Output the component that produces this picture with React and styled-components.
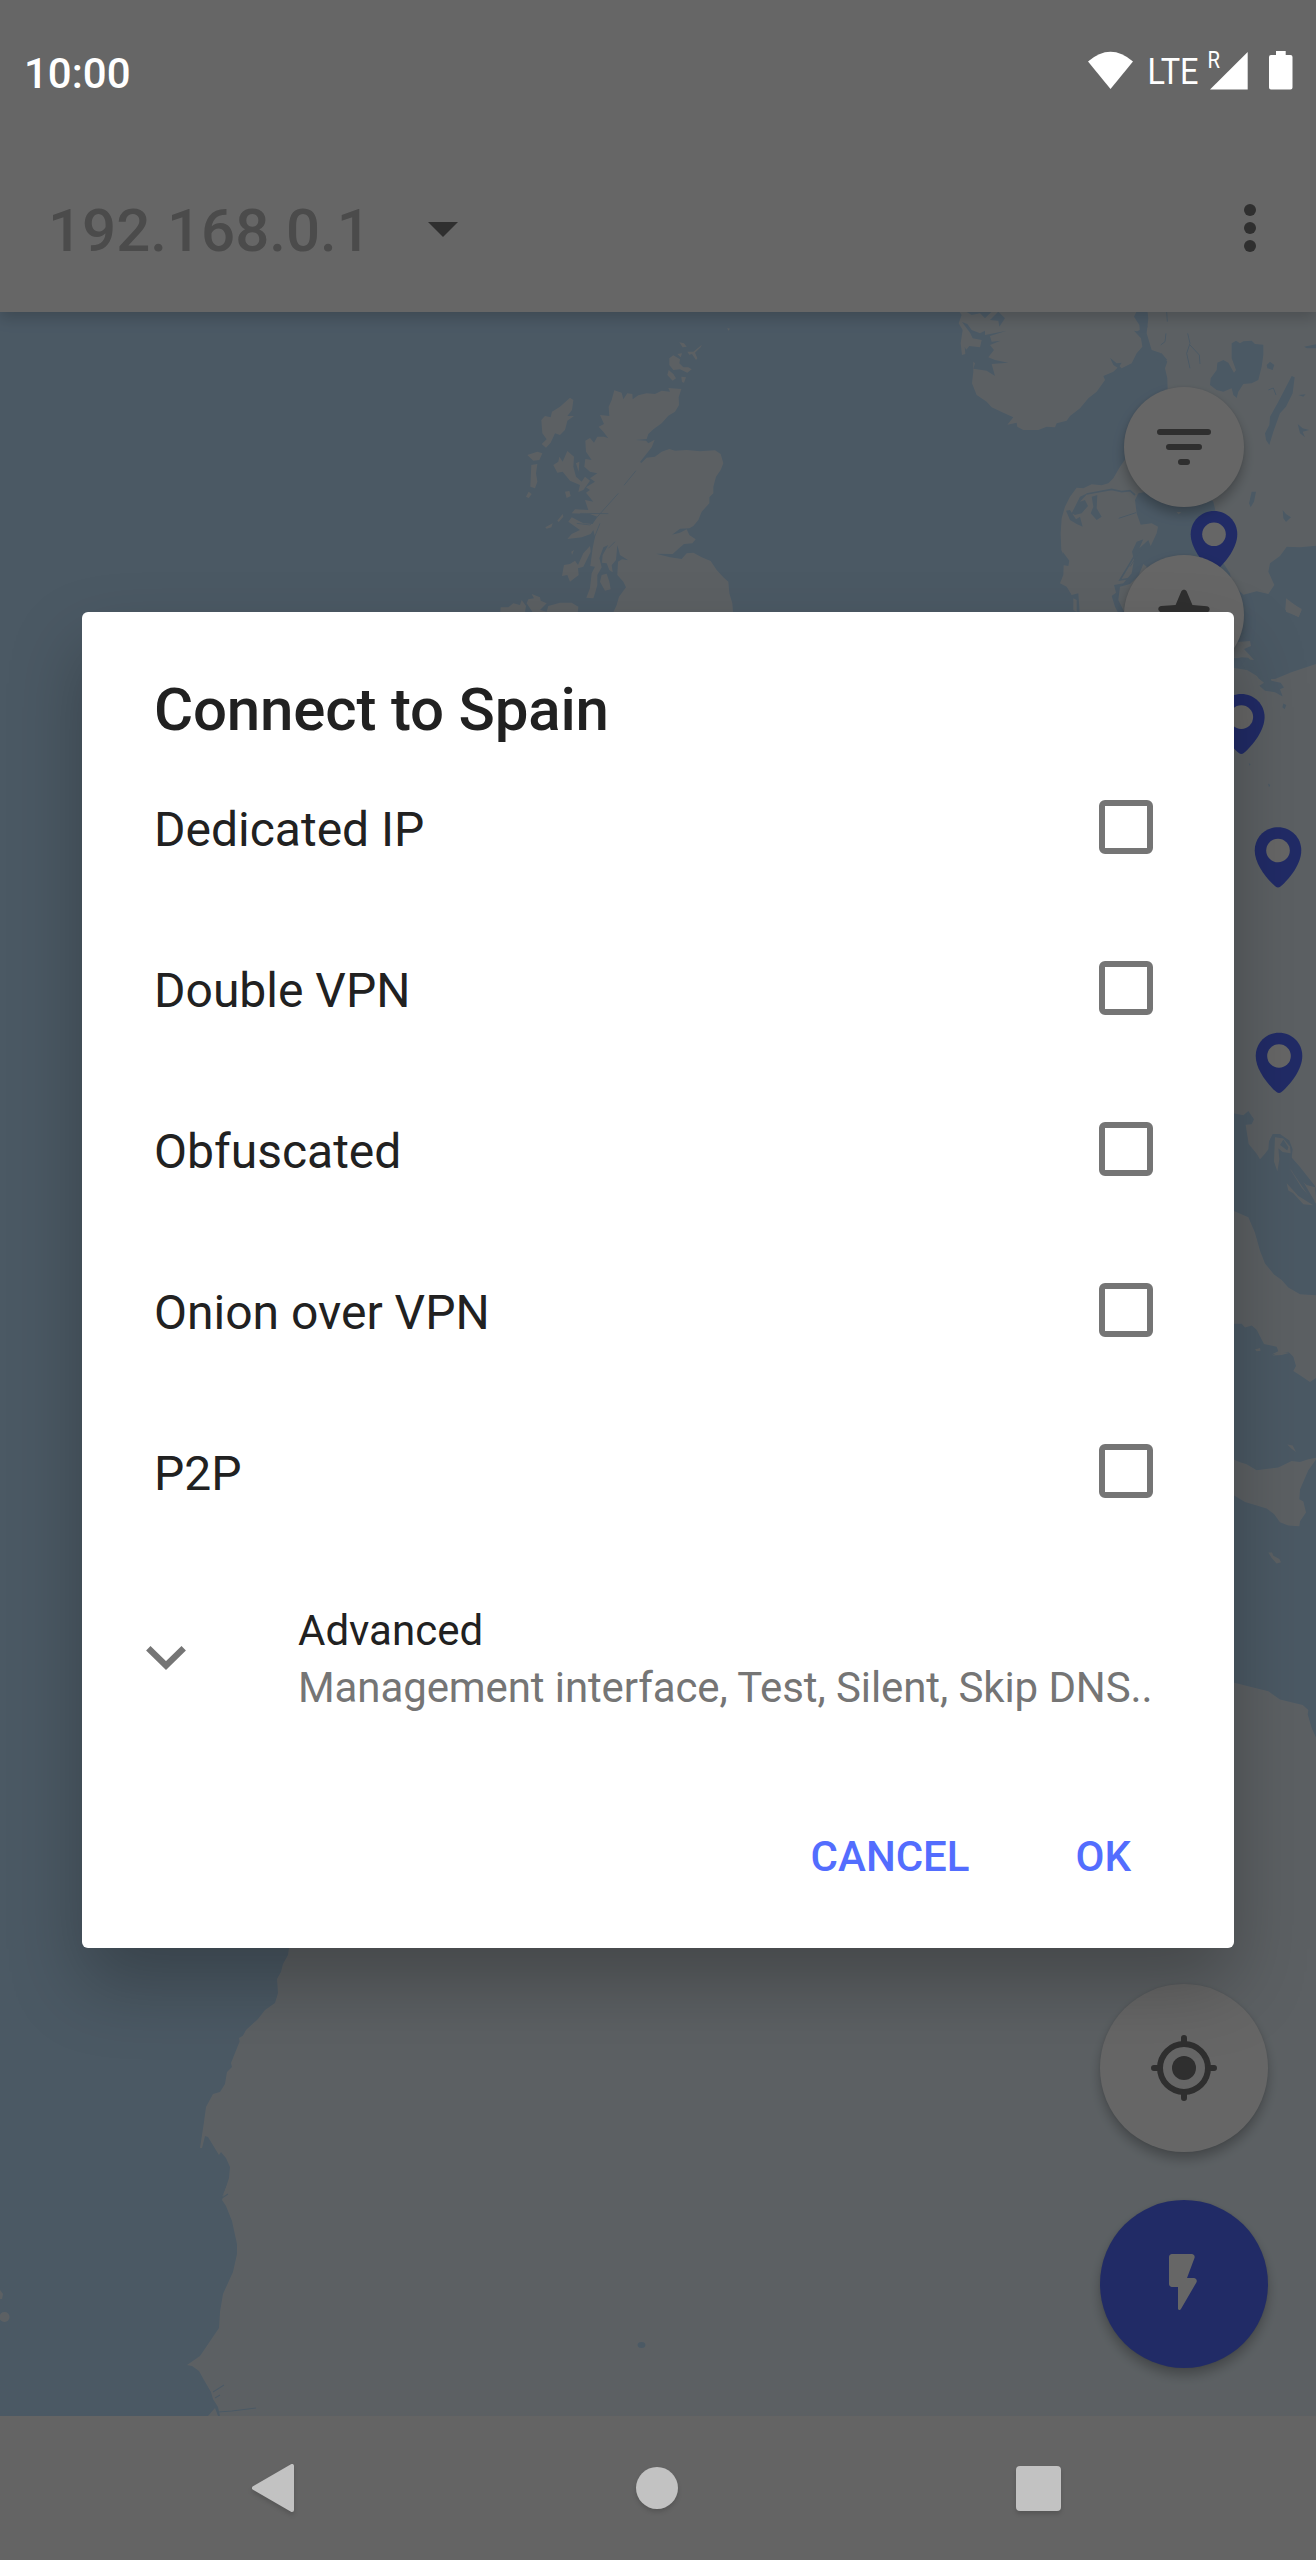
import React from "react";
import styled, { createGlobalStyle } from "styled-components";

const GlobalStyle = createGlobalStyle`
  *, *::before, *::after { box-sizing: border-box; }
  body { margin: 0; background: #fff; }
  svg { display: block; flex: none; }
  button { border: 0; padding: 0; background: none; font: inherit; }
`;

const Screen = styled.div`
  position: relative;
  width: 1316px;
  height: 2560px;
  overflow: hidden;
  display: grid;
  grid-template-rows: 144px 168px 1fr 144px;
  background: linear-gradient(#fff 312px, #fafafa 312px);
  font-family: Roboto, "Noto Sans", sans-serif;
  color: #212121;
`;

const StatusBar = styled.header`
  position: relative;
  z-index: 3;
  display: flex;
  align-items: center;
  justify-content: space-between;
  padding: 0 22px 0 24px;
  color: #fff;
`;

const Clock = styled.time`
  padding-top: 3px;
  font-size: 42px;
  font-weight: 500;
  line-height: 50px;
`;

const StatusGlyphs = styled.svg`
  overflow: visible;
`;

const Toolbar = styled.div`
  position: relative;
  z-index: 1;
  display: flex;
  align-items: center;
  padding: 0 30px 0 48px;
  background: #fff;
  box-shadow: 0 6px 14px rgba(0, 0, 0, 0.18);
  clip-path: inset(0 0 -30px 0);
`;

const Address = styled.h1`
  margin: 0;
  padding-top: 5px;
  width: 380px;
  font-size: 60px;
  font-weight: 500;
  line-height: 72px;
  color: #bbb;
`;

const Caret = styled.span`
  margin-top: 3px;
  border: 15px solid transparent;
  border-top-color: #757575;
  border-bottom-width: 0;
`;

const Overflow = styled.button`
  margin-left: auto;
  width: 72px;
  height: 72px;
  display: flex;
  flex-direction: column;
  align-items: center;
  justify-content: center;
  gap: 6px;
`;

const Dot = styled.span`
  width: 12px;
  height: 12px;
  border-radius: 50%;
  background: #757575;
`;

const MapArea = styled.main`
  position: relative;
  overflow: hidden;
  background: #bbdefb;
`;

const Fab = styled.button`
  position: absolute;
  left: ${(p) => 1184 - p.$size / 2}px;
  top: ${(p) => p.$y - 312 - p.$size / 2}px;
  width: ${(p) => p.$size}px;
  height: ${(p) => p.$size}px;
  display: flex;
  align-items: center;
  justify-content: center;
  border-radius: 50%;
  background: ${(p) => (p.$accent ? "#536dfe" : "#fff")};
  color: ${(p) => (p.$accent ? "#fff" : "#757575")};
  box-shadow: 0 7px 12px rgba(0, 0, 0, 0.26), 0 0 3px rgba(0, 0, 0, 0.08);
`;

const Scrim = styled.div`
  position: absolute;
  inset: 0;
  z-index: 2;
  padding: 612px 82px;
  background: rgba(0, 0, 0, 0.6);
`;

const Dialog = styled.section`
  height: 1336px;
  display: flex;
  flex-direction: column;
  padding-top: 62px;
  border-radius: 6px;
  background: #fff;
  box-shadow: 0 36px 72px rgba(0, 0, 0, 0.26);
`;

const DialogTitle = styled.h2`
  margin: 0 72px 4px;
  font-size: 60px;
  font-weight: 500;
  line-height: 71px;
  letter-spacing: -0.18px;
`;

const OptionRow = styled.label`
  height: 161px;
  display: flex;
  align-items: center;
  justify-content: space-between;
  padding: 0 81px 0 72px;
  font-size: 48px;
  line-height: 56px;
`;

const CheckBox = styled.span`
  width: 54px;
  height: 54px;
  margin-bottom: 6px;
  border: 6px solid #757575;
  border-radius: 6px;
`;

const AdvancedRow = styled.div`
  height: 210px;
  display: flex;
  align-items: center;
  padding: 0 80px 0 64px;
  font-size: 42px;
  line-height: 57px;
`;

const Chevron = styled.svg`
  margin-bottom: 2px;
`;

const AdvancedText = styled.div`
  margin-left: 112px;
  white-space: nowrap;
`;

const Summary = styled.div`
  color: #757575;
  letter-spacing: -0.1px;
`;

const Actions = styled.footer`
  height: 184px;
  display: flex;
  align-items: center;
  justify-content: flex-end;
  gap: 106px;
  padding: 1px 103px 0 0;
`;

const Action = styled.button`
  font-size: 42px;
  font-weight: 500;
  line-height: 50px;
  color: #536dfe;
`;

const NavBar = styled.nav`
  position: relative;
  z-index: 3;
  display: grid;
  grid-template-columns: 1fr 42px 1fr;
  align-items: center;
  padding: 0 255px 0 251px;
  color: #c2c2c2;
`;

const NavButton = styled.button`
  justify-self: ${(p) => p.$side};
  color: inherit;
  filter: drop-shadow(0 3px 2px rgba(0, 0, 0, 0.14));
`;

const HomeDisc = styled.span`
  display: block;
  width: 42px;
  height: 42px;
  margin-left: 2px;
  border-radius: 50%;
  background: currentColor;
`;

const RecentsSquare = styled.span`
  display: block;
  width: 45px;
  height: 45px;
  border-radius: 4px;
  background: currentColor;
`;

const options = ["Dedicated IP", "Double VPN", "Obfuscated", "Onion over VPN", "P2P"];
const pins = [[1214, 534.3], [1241.3, 717.1], [1278, 850.5], [1279, 1056]];

const StatusIcons = () => (
  <StatusGlyphs width="210" height="46" viewBox="1084 50 210 46" fill="#fff">
    <path d="M1088 62.5Q1110.500 43 1133 62.500L1110.500 90Z" />
    <text x="1147.500" y="84.700" fontSize="37" textLength="51" lengthAdjust="spacingAndGlyphs">LTE</text>
    <text x="1207.500" y="68.600" fontSize="23.500" textLength="12.500" lengthAdjust="spacingAndGlyphs">R</text>
    <path d="M1210 90.500L1247.700 53V90.500Z" />
    <path d="M1276 52h9.700v4h4.800a2 2 0 0 1 2 2v30.500a2 2 0 0 1-2 2h-19.500a2 2 0 0 1-2-2V58a2 2 0 0 1 2-2h5z" />
  </StatusGlyphs>
);

const Pin = ({ x, y }) => (
  <g transform={`translate(${x} ${y})`}>
    <path fill="#536dfe" d="M0-23.200C13-23.200 23.300-13 23.300 0C23.300 13 12 28 2.500 36Q0 38-2.500 36C-12 28-23.300 13-23.300 0C-23.300-13-13-23.200 0-23.200Z" />
    <circle r="11.800" fill="#fff" />
  </g>
);

const LAND = "#e6f1f8";
const WATER = "#bbdefb";

const MapDrawing = () => (
  <svg width="1316" height="2104" viewBox="0 312 1316 2104" fill={LAND}>
    {/* Scotland, the Hebrides and Orkney */}
    <g transform="translate(480 310) scale(.33333)">
      <path d="M403 241L425 248L430 268L442 250L457 252L458 268L475 256L500 250L525 252L545 242L570 245L565 234L604 237L596 262L597 285L585 305L565 317L545 340L520 358L505 372L500 387L466 390L498 392L505 400L524 389L515 412L480 456L484 459L500 443L525 440L545 425L568 417L585 422L620 420L660 424L705 421L722 432L730 460L722 480L708 500L700 530L700 550L688 562L688 580L665 605L655 630L640 648L628 655L600 656L576 674L600 668L620 658L628 675L647 688L637 700L612 702L597 715L578 732L528 731L570 742L605 747L620 730L640 728L665 742L692 753L710 780L730 802L745 815L748 850L757 880L760 920L394 920L410 885L417 860L438 832L430 815L412 795L414 755L426 748L445 751L420 735L412 705L408 750L395 766L398 787L388 780L380 760L366 758L368 735L385 705L370 712L358 745L365 772L352 795L352 825L345 850L340 865L319 863L330 835L335 790L345 770L331 768L338 715L345 680L340 660L332 672L305 682L262 687L275 672L300 660L265 635L275 622L310 640L338 642L352 620L330 612L275 610L285 598L325 600L315 570L340 575L318 548L330 540L318 532L345 515L330 505L352 490L330 485L313 470L316 447L335 450L318 425L316 392L330 384L342 398L352 380L372 380L385 385L370 365L356 350L372 342L360 315L388 318L386 290L395 270Z" />
      <path d="M270 263L280 270L276 300L262 318L282 318L262 332L255 360L240 375L225 370L212 398L198 413L185 402L200 388L187 370L184 330L195 318L212 322L216 305L240 290Z" />
      <path d="M142 435L172 425L187 430L178 450L160 452ZM154 465L172 462L168 490L172 515L165 535L151 530ZM146 545L155 552L146 564L138 560ZM262 423L282 440L280 470L288 500L305 515L315 500L330 512L310 540L295 546L300 525L270 512L248 485L232 488L220 465L235 455L238 440L248 455ZM255 545L268 543L272 558L260 564ZM232 632L248 612L250 620L236 636ZM196 652L218 640L214 652L200 656ZM330 708L332 725L310 770L294 775L296 795L270 815L262 795L246 798L252 765L270 762L285 752L294 765L310 730ZM365 795L380 791L388 815L392 838L375 842L360 815ZM274 725L282 720L276 735ZM288 460L298 455L296 485Z" />
      <path d="M568 145L580 136L600 148L598 160L610 172L625 172L635 178L622 188L600 178L580 180L568 165ZM598 97L612 100L620 110L608 112ZM592 132L606 130L602 142ZM622 125L640 125L665 105L662 112L645 128L652 145L648 150L636 132L628 134ZM566 180L580 192L588 205L578 212L562 195ZM604 200L618 202L612 218L606 216ZM742 54L750 56L745 62Z" />
      <path d="M60 920L62 892L85 892L100 880L120 885L125 870L138 888L135 905L160 910L150 895L140 880L145 868L162 865L155 852L180 862L182 872L200 880L180 900L200 905L205 888L240 878L275 878L295 890L292 920Z" />
      <path fill="none" stroke={WATER} strokeWidth="2.500" d="M468 482L432 526M415 550L330 645L290 640M385 611L300 610M360 640L340 690M405 695L385 715" />
    </g>

    {/* Norway, Sweden and Denmark */}
    <g transform="translate(930 300) scale(.33333)">
      <path d="M85 30L95 45L86 70L98 90L92 130L96 165L106 162L104 140L120 170L130 180L130 215L126 250L140 285L170 305L185 322L220 338L250 352L232 374L260 368L262 380L280 390L325 390L350 380L375 382L380 370L410 362L420 348L450 325L475 295L500 275L525 240L520 228L550 215L568 198L575 205L605 190L620 160L637 140L633 115L612 92L630 95L628 75L612 50L622 30Z" />
      <path d="M652 30L655 55L650 100L665 150L690 158L712 185L705 205L712 235L714 300L800 560L850 605L858 640L880 790L900 820L905 850L940 884L980 874L1015 882L1033 855L1015 815L1020 790L1050 768L1070 740L1110 742L1170 736L1170 30Z" />
      <path d="M590 472L570 500L550 535L535 550L515 556L485 553L460 565L440 563L420 590L405 620L395 655L392 700L394 750L402 770L400 825L390 850L410 860L425 885L445 880L450 950L570 950L555 920L545 888L558 878L552 855L580 850L605 820L612 780L606 755L620 725L640 718L628 745L655 720L662 738L680 700L684 680L665 670L632 674L620 640L615 600L625 580L680 570Z" />
      <path d="M570 860L600 852L625 828L640 792L650 800L650 950L590 950L565 900ZM430 895L440 900L440 936L430 930ZM740 636L754 636L746 643ZM1068 895L1115 930L1105 950L1068 935Z" />
      <g fill={WATER}>
        <path d="M100 30L125 45L150 40L165 55L190 30ZM96 66L112 72L125 90L150 100L165 92L165 105L230 92L180 108L185 125L212 122L180 135L192 150L175 172L195 180L235 188L185 192L195 228L170 212L130 206L135 190L112 170L108 150L118 138L150 142L155 120L128 115L120 98ZM205 35L225 55L208 80L205 62L180 60ZM540 173L560 190L575 188L565 205L550 195Z" />
        <path d="M905 130L918 122L930 130L940 124L965 122L975 132L1000 134L1000 165L995 200L985 240L965 250L940 252L925 275L920 294L910 285L905 265L880 275L860 270L840 255L842 235L860 210L862 188L880 180L895 188L912 218L918 210L905 175ZM1010 195L1020 185L1033 195L1028 210L1012 205ZM1085 228L1094 232L1088 280L1068 320L1050 340L1030 395L1018 435L1008 420L1005 400L1018 375L1020 350L1045 305ZM1103 372L1118 385L1138 390L1118 395L1125 412L1110 400ZM965 575L978 575L972 605L962 622L957 610ZM1058 630L1068 642L1083 652L1068 666L1060 655ZM1122 140L1160 132L1160 145L1130 145ZM1105 285L1127 283L1120 290ZM408 632L420 630L438 658L450 650L458 680L440 672L420 660ZM425 640L450 590L475 578L450 605L465 600L474 618L455 640L435 645ZM485 590L502 585L500 625L515 650L500 660L482 640L490 620ZM398 755L418 782L415 798L398 795ZM670 165L695 160L712 180L690 190Z" />
        <path fill="none" stroke={WATER} strokeWidth="5" d="M470 582L545 568L575 575L600 572L615 585M645 30L640 65L650 80L620 98M618 760L570 840L600 835" />
        <path fill="none" stroke={WATER} strokeWidth="3" d="M566 655L618 638M773 100L780 130L770 160L780 205M780 135L808 165L810 192M710 36L712 65M708 100L705 125L692 135M1015 270L1030 264L1038 285M640 740L600 800" />
      </g>
    </g>

    {/* Baltic coast and central Europe */}
    <path d="M1200 650L1216 642L1221 633L1225 643L1250 641L1251 646L1244 649L1254 660L1243 659L1233 658L1234 668L1247 670L1262 679L1275 679L1292 672L1316 664V2416H0L100 1700L1150 1250Z" />
    <g transform="translate(1200 600) scale(.33333 .35714)">
      <path d="M258 0L305 25L296 48L256 28Z" />
      <path fill={WATER} d="M100 165L125 160L145 162L160 178L158 190L135 188L110 180ZM165 205L180 200L192 215L212 218L214 226L242 232L252 245L240 250L248 270L225 258L195 254L178 240L192 232L176 220ZM250 290L259 294L254 306L247 300ZM146 457L152 459L149 464ZM204 514L211 518L207 524Z" />
    </g>

    {/* Seas around Italy */}
    <g transform="translate(1200 1100) scale(.33333 .54845)">
      <path fill={WATER} d="M0 24H100L130 28L145 20L162 35L155 44L137 45L146 80L170 98L180 108L195 98L205 90L207 75L218 62L240 62L268 74L278 90L275 105L300 122L345 157L350 170V356L300 354L265 342L245 328L222 318L195 298L180 275L165 242L145 214L100 202L0 200ZM100 408L125 408L135 415L155 411L170 419L192 445L230 450L235 458L215 464L265 459L280 468L288 485L280 494L300 502L330 514L350 506V652L325 655L300 660L275 658L235 670L170 675L140 664L118 660L100 655L0 650V400ZM0 720H100L135 733L200 745L222 755L240 770L265 776L298 777L300 768L318 752L310 732L298 728L300 710L325 675L350 654V1165L335 1145L323 1120L325 1112L308 1103L240 1093L205 1078L100 1062L0 1050Z" />
      <path d="M225 68L250 70L270 85L272 97L248 95L235 88L238 108L232 130L222 112ZM165 455L180 452L182 457L170 458ZM218 466L240 459L270 461L245 465ZM205 825L216 825L220 831L238 837L243 843L230 845L215 835ZM260 152L295 175L340 192L310 190L280 170L265 165ZM270 126L300 145L320 155L345 159L350 190L305 160ZM262 628L278 630L288 642L275 636Z" />
      <path fill={WATER} d="M250 72L265 86L262 92L240 82ZM272 100L290 128L330 170L345 185L338 186L278 132Z" />
    </g>

    {/* Atlantic and the African coast */}
    <path fill={WATER} d="M0 650H70V1700H300L289 1948L288 1955L283 1964L281 1972L277 1979L278 1993L275 2003L265 2010L258 2019L246 2030L239 2043L231 2063L232 2067L227 2072L225 2084L220 2092L213 2094L206 2107L204 2122L200 2148L202 2148L205 2136L208 2137L219 2155L221 2152L226 2158L230 2167L229 2178L222 2200L226 2206L232 2221L237 2244L237 2254L233 2272L223 2294L220 2312L219 2328L200 2356L187 2365L192 2366L199 2371L204 2380L211 2392L213 2399L218 2407L220 2416H0Z" />
    <path d="M0 2290L3 2294L2 2299H0ZM239 2038L246 2034L240 2043ZM222 2197L228 2183L229 2188L224 2194Z" />
    <circle cx="4.500" cy="2317" r="5" />
    <path d="M208 2416L215 2408L218 2416Z" />
    <path fill="none" stroke={WATER} strokeWidth="1.200" d="M213 2392L224 2385M215 2398L220 2395M218 2412L232 2411L256 2408M222 2198L228 2194" />
    <ellipse cx="641.500" cy="2345" rx="4" ry="3" fill={WATER} />

    {pins.map(([x, y]) => <Pin key={y} x={x} y={y} />)}
  </svg>
);

const FilterIcon = () => (
  <svg width="72" height="72" viewBox="0 0 72 72" stroke="currentColor" strokeWidth="6" strokeLinecap="round">
    <path d="M12 21H60M21 36H51M33 51H39" />
  </svg>
);

const StarIcon = () => (
  <svg width="72" height="72" viewBox="0 0 24 24" fill="currentColor">
    <path d="M12 17.270l4.150 2.510c.76.46 1.690-.22 1.490-1.080l-1.100-4.720 3.670-3.180c.67-.58.31-1.680-.57-1.750l-4.830-.41-1.890-4.460c-.34-.81-1.500-.81-1.840 0L9.190 8.630l-4.830.41c-.88.07-1.240 1.170-.57 1.750l3.670 3.180-1.100 4.720c-.2.86.73 1.540 1.490 1.080l4.150-2.500z" />
  </svg>
);

const LocateIcon = () => (
  <svg width="72" height="72" viewBox="0 0 72 72" fill="none" stroke="currentColor" strokeWidth="6" strokeLinecap="round">
    <circle cx="36" cy="36" r="24" />
    <circle cx="36" cy="36" r="12" fill="currentColor" stroke="none" />
    <path d="M36 6V11M36 61V66M6 36H11M61 36H66" />
  </svg>
);

const BoltIcon = () => (
  <svg width="72" height="72" viewBox="0 0 24 24" fill="currentColor">
    <path d="M7 3v9c0 .55.45 1 1 1h2v7.150c0 .51.67.69.93.25l5.190-8.900c.39-.67-.09-1.500-.86-1.500H13l2.490-6.650c.25-.65-.23-1.350-.93-1.350H8c-.55 0-1 .45-1 1z" />
  </svg>
);

const BackIcon = () => (
  <svg width="44" height="50" viewBox="0 0 44 50" fill="currentColor" stroke="currentColor" strokeWidth="4" strokeLinejoin="round">
    <path d="M3 25L41 3V47Z" />
  </svg>
);

export default function App() {
  return (
    <>
      <GlobalStyle />
      <Screen>
        <StatusBar>
          <Clock>10:00</Clock>
          <StatusIcons />
        </StatusBar>
        <Toolbar>
          <Address>192.168.0.1</Address>
          <Caret />
          <Overflow aria-label="More options"><Dot /><Dot /><Dot /></Overflow>
        </Toolbar>
        <MapArea>
          <MapDrawing />
          <Fab $size={120} $y={447} aria-label="Filter"><FilterIcon /></Fab>
          <Fab $size={120} $y={615} aria-label="Favourites"><StarIcon /></Fab>
          <Fab $size={168} $y={2068} aria-label="Locate"><LocateIcon /></Fab>
          <Fab $size={168} $y={2284} $accent aria-label="Connect"><BoltIcon /></Fab>
        </MapArea>
        <NavBar>
          <NavButton $side="start" aria-label="Back"><BackIcon /></NavButton>
          <NavButton $side="center" aria-label="Home"><HomeDisc /></NavButton>
          <NavButton $side="end" aria-label="Recents"><RecentsSquare /></NavButton>
        </NavBar>
        <Scrim>
          <Dialog role="dialog">
            <DialogTitle>Connect to Spain</DialogTitle>
            {options.map((name) => (
              <OptionRow key={name}>
                {name}
                <CheckBox />
              </OptionRow>
            ))}
            <AdvancedRow>
              <Chevron width="40" height="24" viewBox="0 0 40 24" fill="none" stroke="#757575" strokeWidth="6.300">
                <path d="M2.300 2.300L20 19.500L37.700 2.300" />
              </Chevron>
              <AdvancedText>
                <div>Advanced</div>
                <Summary>Management interface, Test, Silent, Skip DNS..</Summary>
              </AdvancedText>
            </AdvancedRow>
            <Actions>
              <Action>CANCEL</Action>
              <Action>OK</Action>
            </Actions>
          </Dialog>
        </Scrim>
      </Screen>
    </>
  );
}
